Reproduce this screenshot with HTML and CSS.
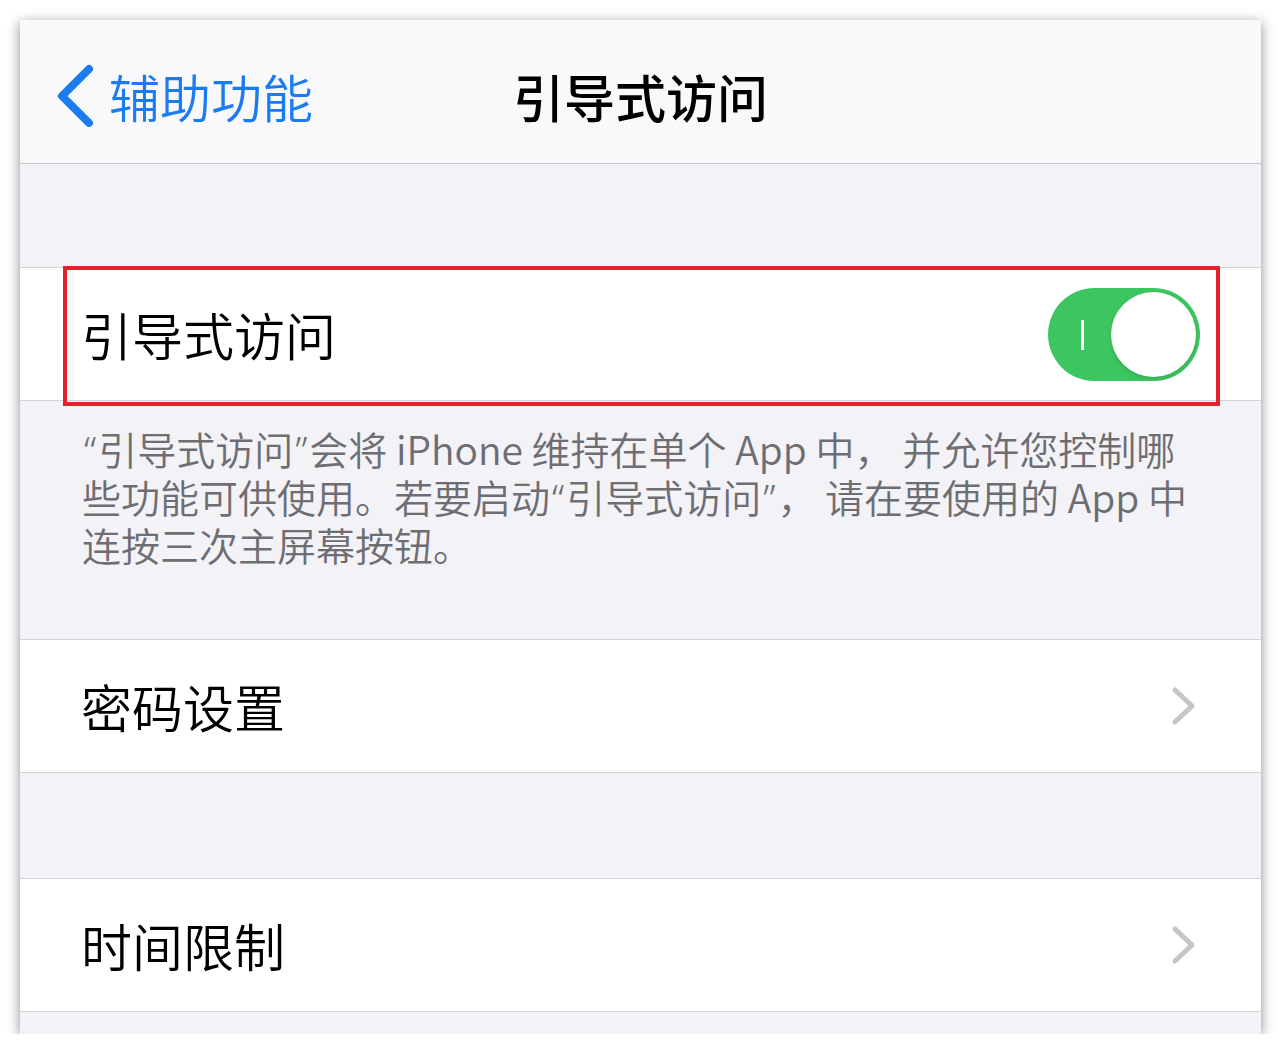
FILE: index.html
```html
<!DOCTYPE html>
<html lang="zh-CN">
<head>
    <meta charset="UTF-8">
    <meta name="viewport" content="width=device-width, initial-scale=1.0">
    <title>引导式访问</title>
    <link rel="stylesheet" href="styles.css">
</head>
<body>
    <div class="screen">
        <header class="nav">
            <a class="back" href="#">
                <svg class="back-icon" viewBox="0 0 42 66" width="42" height="66">
                    <path d="M36 6 L9 33 L36 60" fill="none" stroke="#1b7cf2" stroke-width="8" stroke-linecap="round" stroke-linejoin="round"/>
                </svg>
                <span>辅助功能</span>
            </a>
            <h1 class="nav-title">引导式访问</h1>
            <div></div>
        </header>

        <div class="spacer"></div>

        <section class="group marked">
            <div class="row">
                <span class="label">引导式访问</span>
                <div class="switch on">
                    <span class="switch-mark"></span>
                    <span class="knob"></span>
                </div>
            </div>
            <!-- annotation box drawn over the row -->
            <div class="highlight"></div>
        </section>

        <p class="footer"><span class="q">“</span>引导式访问<span class="q">”</span>会将 iPhone 维持在单个 App 中，&nbsp;并允许您控制哪<br>些功能可供使用。若要启动<span class="q">“</span>引导式访问<span class="q">”</span>，&nbsp;请在要使用的 App 中<br>连按三次主屏幕按钮。</p>

        <section class="group">
            <div class="row">
                <span class="label">密码设置</span>
                <svg class="chevron" viewBox="0 0 26 40" width="26" height="40">
                    <path d="M4 4 L21 20 L4 36" fill="none" stroke="#c5c5c9" stroke-width="5" stroke-linecap="round" stroke-linejoin="round"/>
                </svg>
            </div>
        </section>

        <div class="spacer second"></div>

        <section class="group">
            <div class="row">
                <span class="label">时间限制</span>
                <svg class="chevron" viewBox="0 0 26 40" width="26" height="40">
                    <path d="M4 4 L21 20 L4 36" fill="none" stroke="#c5c5c9" stroke-width="5" stroke-linecap="round" stroke-linejoin="round"/>
                </svg>
            </div>
        </section>
    </div>
</body>
</html>
```

FILE: styles.css
```css
body {
    margin: 0;
    padding: 0;
    background-color: #fff;
    font-family: "Noto Sans CJK SC", "Noto Sans", sans-serif;
}

.screen {
    margin: 20px 0 0 20px;
    width: 1241px;
    height: 1014px;
    background-color: #f2f2f7;
    box-shadow: 0 3px 12px rgba(0, 0, 0, 0.45);
    overflow: hidden;
    display: flex;
    flex-direction: column;
}

.nav {
    height: 144px;
    box-sizing: border-box;
    padding-top: 8px;
    background-color: #f9f9fb;
    border-bottom: 1px solid #c6c6c9;
    display: grid;
    grid-template-columns: 1fr auto 1fr;
    align-items: center;
}

.back {
    display: flex;
    align-items: center;
    padding-left: 33px;
    color: #1b7cf2;
    text-decoration: none;
    font-size: 51px;
    font-weight: 350;
}

.back-icon {
    margin-right: 14px;
}

.nav-title {
    margin: 0;
    font-size: 51px;
    font-weight: 500;
    color: #000;
}

.spacer {
    height: 103px;
    flex-shrink: 0;
}

.spacer.second {
    height: 105px;
}

.group {
    background-color: #fff;
    border-top: 1px solid #d4d4d8;
    border-bottom: 1px solid #d4d4d8;
    flex-shrink: 0;
}

.marked {
    position: relative;
}

.row {
    height: 132px;
    display: flex;
    align-items: center;
    justify-content: space-between;
    padding: 0 62px 0 61px;
}

.label {
    font-size: 51px;
    font-weight: 350;
    color: #000;
}

.switch {
    position: relative;
    width: 152px;
    height: 93px;
    border-radius: 47px;
    background-color: #3dc560;
    margin-right: -1px;
}

.switch-mark {
    position: absolute;
    left: 33px;
    top: 32px;
    width: 3px;
    height: 30px;
    background-color: #fff;
}

.knob {
    position: absolute;
    right: 4px;
    top: 4px;
    width: 85px;
    height: 85px;
    border-radius: 50%;
    background-color: #fff;
    box-shadow: 0 2px 4px rgba(0, 0, 0, 0.12);
}

.highlight {
    position: absolute;
    left: 43px;
    top: -2px;
    width: 1157px;
    height: 140px;
    box-sizing: border-box;
    border: 4px solid #e3202b;
}

.footer {
    margin: 0;
    height: 238px;
    box-sizing: border-box;
    padding: 23px 20px 0 62px;
    font-size: 39px;
    font-weight: 350;
    line-height: 48px;
    color: #6d6d72;
    white-space: nowrap;
    flex-shrink: 0;
}

/* narrow latin quotes, as on iOS */
.q {
    font-family: "Noto Sans", sans-serif;
    line-height: 1;
    padding: 0 2px;
}

.chevron {
    margin-right: 2px;
}
```
